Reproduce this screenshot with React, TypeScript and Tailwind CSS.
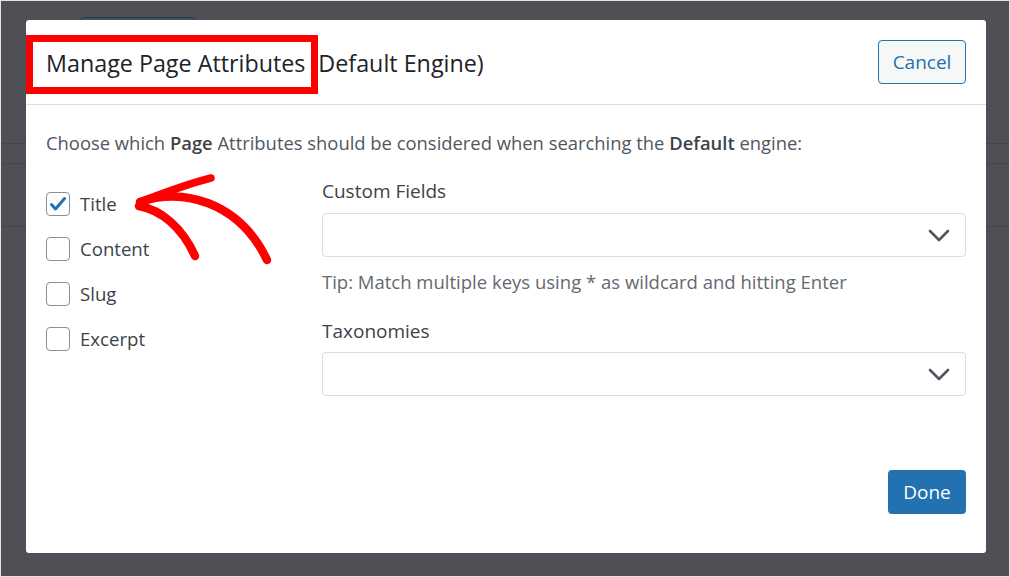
import { useState } from 'react';

const fieldRows = ['Title', 'Content', 'Slug', 'Excerpt'];

function Chevron() {
  return (
    <svg width="22" height="13" viewBox="0 0 22 13" fill="none">
      <path d="M2 2l9 9 9-9" stroke="#50575e" strokeWidth="2.6" strokeLinecap="round" strokeLinejoin="round" />
    </svg>
  );
}

function Checkbox({ checked, onChange }: { checked: boolean; onChange: () => void }) {
  return (
    <button
      onClick={onChange}
      className="w-[24px] h-[24px] rounded-[4px] border border-[#8c8f94] bg-white flex items-center justify-center shrink-0"
    >
      {checked && (
        <svg width="18" height="16" viewBox="0 0 18 16" fill="none">
          <path d="M2.5 8.5l4 4.5L15.5 2.5" stroke="#2271b1" strokeWidth="3" strokeLinecap="round" strokeLinejoin="round" />
        </svg>
      )}
    </button>
  );
}

function SelectBox() {
  return (
    <div className="h-[44px] rounded-[4px] border border-[#dcdcde] bg-white flex items-center justify-end pr-[15px]">
      <Chevron />
    </div>
  );
}

export default function App() {
  const [checked, setChecked] = useState<Record<string, boolean>>({ Title: true });

  return (
    <div
      className="relative w-[1010px] h-[577px] overflow-hidden border border-[#e2e4e7] bg-[#4f5055]"
      style={{ fontFamily: '"Open Sans", "Noto Sans", sans-serif' }}
    >
      {/* page behind the overlay */}
      <div className="flex flex-col h-full">
        <div className="h-[142px] pl-[79px] pt-[16px]">
          <div className="w-[116px] h-[40px] rounded-[4px] border border-[#0e3c5a] bg-[#4a4f56]" />
        </div>
        <div className="h-[20px] border-t border-[#45464a]" />
        <div className="h-[63px] border-t border-[#45464a]" />
        <div className="flex-1 border-t border-[#45464a]" />
      </div>

      {/* modal */}
      <div className="absolute left-[25px] top-[19px] w-[960px] h-[533px] bg-white rounded-[3px] flex flex-col">
        <div className="h-[85px] border-b border-[#dcdcde] flex items-center justify-between pl-[20px] pr-[20px]">
          <h1 className="text-[23.3px] text-[#1d2327] leading-none pt-[4px]">Manage Page Attributes (Default Engine)</h1>
          <button className="w-[88px] h-[44px] rounded-[4px] border border-[#2271b1] bg-[#f6f7f7] text-[19px] text-[#2271b1]">
            Cancel
          </button>
        </div>

        <div className="flex-1 px-[20px] pt-[25px]">
          <p className="text-[18.4px] leading-[26px] text-[#50575e] whitespace-nowrap">
            Choose which <b className="font-semibold text-[#3c434a]">Page</b> Attributes should be considered when searching the{' '}
            <b className="font-semibold text-[#3c434a]">Default</b> engine:
          </p>

          <div className="flex mt-[22px]">
            <div className="w-[276px] pt-[3px] flex flex-col">
              {fieldRows.map((name) => (
                <label key={name} className="h-[45px] flex items-center gap-[10px] cursor-pointer">
                  <Checkbox
                    checked={!!checked[name]}
                    onChange={() => setChecked((c) => ({ ...c, [name]: !c[name] }))}
                  />
                  <span className="text-[18.6px] text-[#3c434a]">{name}</span>
                </label>
              ))}
            </div>

            <div className="flex-1 flex flex-col">
              <div className="text-[19px] leading-[26px] text-[#3c434a]">Custom Fields</div>
              <div className="mt-[9px]">
                <SelectBox />
              </div>
              <div className="mt-[13px] text-[18.5px] leading-[24px] text-[#646970] whitespace-nowrap">
                Tip: Match multiple keys using * as wildcard and hitting Enter
              </div>
              <div className="mt-[24px] text-[19px] leading-[26px] text-[#3c434a]">Taxonomies</div>
              <div className="mt-[8px]">
                <SelectBox />
              </div>
            </div>
          </div>
        </div>

        <div className="flex justify-end px-[20px] pb-[39px]">
          <button className="w-[78px] h-[44px] rounded-[4px] bg-[#2271b1] text-white text-[19px]">Done</button>
        </div>
      </div>

      {/* annotation: red highlight box */}
      <div className="absolute left-[25px] top-[34px] w-[292px] h-[59px] border-[7px] border-[#ff0000] pointer-events-none" />

      {/* annotation: red arrow */}
      <svg className="absolute left-0 top-0 pointer-events-none" width="1010" height="577" viewBox="0 0 1010 577" fill="none">
        <path d="M139 201 C 180 186, 238 200, 266 259" stroke="#ff0000" strokeWidth="8.5" strokeLinecap="round" />
        <path d="M139 201 C 165 191, 190 182, 210 177" stroke="#ff0000" strokeWidth="7.5" strokeLinecap="round" />
        <path d="M138 205 C 160 209, 181 226, 194 255" stroke="#ff0000" strokeWidth="8.5" strokeLinecap="round" />
      </svg>
    </div>
  );
}
